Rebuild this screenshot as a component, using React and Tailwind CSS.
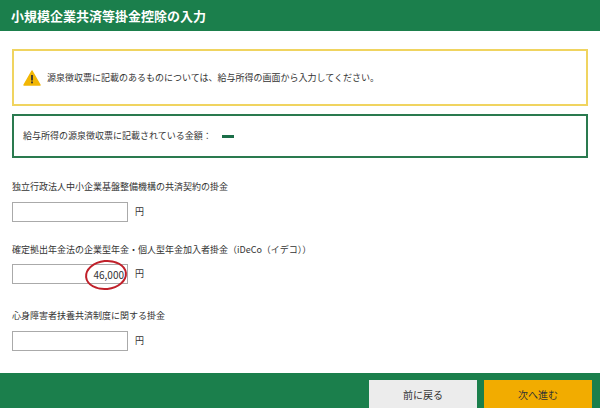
export default function App() {
  const f = { fontFamily: '"Noto Sans CJK JP", "Noto Sans", sans-serif' };
  return (
    <div className="w-[600px] h-[408px] bg-white flex flex-col text-[#333]" style={f}>
      <div className="h-[31px] bg-[#1b7f4c] text-white text-[13px] font-bold flex items-center pl-[11px] shrink-0">小規模企業共済等掛金控除の入力</div>
      <div className="flex-1 px-[12px] pt-[18px] flex flex-col">
        <div className="h-[57px] border-2 border-[#f0d460] flex items-center pl-[9px] gap-[6px] text-[9px]">
          <svg width="18" height="16" viewBox="0 0 18 16"><path d="M9 1 L17 15 H1 Z" fill="#f2b705" stroke="#f2b705" strokeLinejoin="round" strokeWidth="1.5"/><rect x="8.1" y="5" width="1.8" height="5.5" fill="#333"/><rect x="8.1" y="11.5" width="1.8" height="1.8" fill="#333"/></svg>
          <span>源泉徴収票に記載のあるものについては、給与所得の画面から入力してください。</span>
        </div>
        <div className="mt-[8px] h-[44px] border-2 border-[#2a7a4f] flex items-center pl-[9px] text-[9px]">
          <span>給与所得の源泉徴収票に記載されている金額：</span>
          <span className="ml-[10px] w-[12px] h-[3px] bg-[#1b6e48]" />
        </div>
        <div className="mt-[22px] text-[9px]">独立行政法人中小企業基盤整備機構の共済契約の掛金</div>
        <div className="mt-[8px] flex items-center gap-[7px]">
          <div className="w-[116px] h-[20px] border border-[#aaa]" />
          <span className="text-[9px]">円</span>
        </div>
        <div className="mt-[21px] text-[9px]">確定拠出年金法の企業型年金・個人型年金加入者掛金（iDeCo（イデコ））</div>
        <div className="mt-[8px] flex items-center gap-[7px]">
          <div className="relative w-[116px] h-[20px] border border-[#aaa] flex items-center justify-end pr-[3px] text-[10px]">
            46,000
            <div className="absolute left-[72px] top-[-5px] w-[42px] h-[30px] rounded-[50%] border-2 border-[#c0202a] -rotate-6" />
          </div>
          <span className="text-[9px]">円</span>
        </div>
        <div className="mt-[25px] text-[9px]">心身障害者扶養共済制度に関する掛金</div>
        <div className="mt-[8px] flex items-center gap-[7px]">
          <div className="w-[116px] h-[20px] border border-[#aaa]" />
          <span className="text-[9px]">円</span>
        </div>
      </div>
      <div className="h-[35px] bg-[#1b7f4c] flex items-end justify-end gap-[7px] pr-[8px] shrink-0">
        <div className="w-[108px] h-[28px] bg-[#ececec] flex items-center justify-center text-[10px]">前に戻る</div>
        <div className="w-[108px] h-[28px] bg-[#f2ac00] flex items-center justify-center text-[10px]">次へ進む</div>
      </div>
    </div>
  );
}
